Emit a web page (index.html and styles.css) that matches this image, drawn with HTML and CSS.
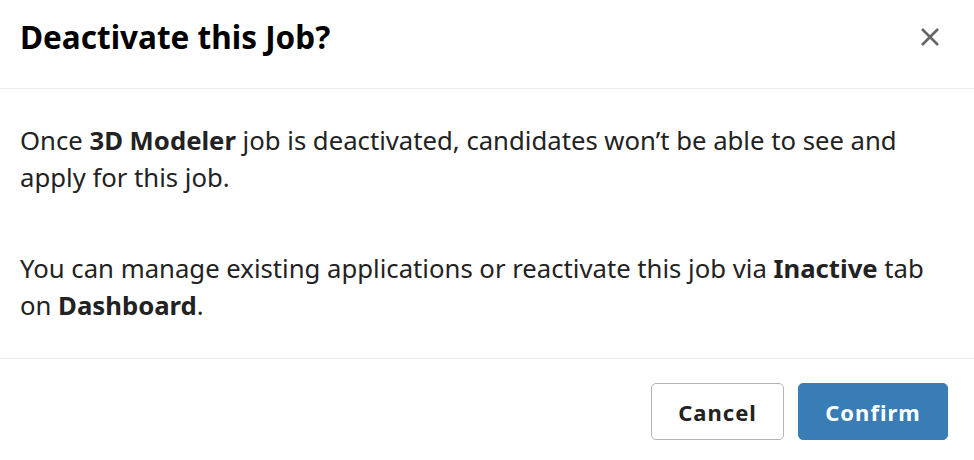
FILE: index.html
```html
<!DOCTYPE html>
<html>
<head>
<meta charset="utf-8">
<link rel="stylesheet" href="styles.css">
</head>
<body>
<div class="modal">
  <div class="modal-header">
    <h1 class="modal-title">Deactivate this Job?</h1>
    <button class="close-btn" aria-label="Close">
      <svg width="20" height="20" viewBox="0 0 20 20"><path d="M2 2 L18 18 M18 2 L2 18" stroke="#666" stroke-width="2.6" stroke-linecap="butt" fill="none"/></svg>
    </button>
  </div>
  <div class="modal-body">
    <p class="para">Once <b>3D Modeler</b> job is deactivated, candidates won’t be able to see and apply for this job.</p>
    <p class="para">You can manage existing applications or reactivate this job via <b>Inactive</b> tab on <b>Dashboard</b>.</p>
  </div>
  <div class="modal-footer">
    <button class="btn btn-secondary">Cancel</button>
    <button class="btn btn-primary">Confirm</button>
  </div>
</div>
</body>
</html>
```
FILE: styles.css
```css
* { box-sizing: border-box; }
html, body { margin: 0; padding: 0; background: #fff; }
body { font-family: "Noto Sans", "Open Sans", sans-serif; color: #222; }
.modal { width: 974px; height: 460px; display: flex; flex-direction: column; }
.modal-header {
  height: 89px;
  border-bottom: 1px solid #ebebef;
  display: flex;
  align-items: center;
  justify-content: space-between;
  padding: 0 34px 0 20px;
}
.modal-title { margin: 0; font-size: 31.5px; font-weight: 700; color: #000; line-height: 1; position: relative; top: -7px; }
.close-btn { border: 0; background: none; padding: 0; width: 20px; height: 20px; cursor: pointer; position: relative; top: -7px; }
.close-btn svg { display: block; }
.modal-body { height: 270px; border-bottom: 1px solid #ebebef; padding: 33px 40px 0 20px; }
.para { margin: 0 0 54px 0; font-size: 25.7px; line-height: 37px; color: #222; }
.para b { font-weight: 700; }
.modal-footer { flex: 1; display: flex; justify-content: flex-end; align-items: flex-start; gap: 14px; padding: 24px 26px 0 0; }
.btn { height: 57px; border-radius: 5px; font-family: "Noto Sans", sans-serif; font-size: 22px; font-weight: 700; letter-spacing: 1px; cursor: pointer; padding: 0; }
.btn-secondary { width: 133px; background: #fff; border: 1px solid #b5b5b5; color: #222; }
.btn-primary { width: 150px; background: #387db5; border: 1px solid #387db5; color: #fff; }
```
